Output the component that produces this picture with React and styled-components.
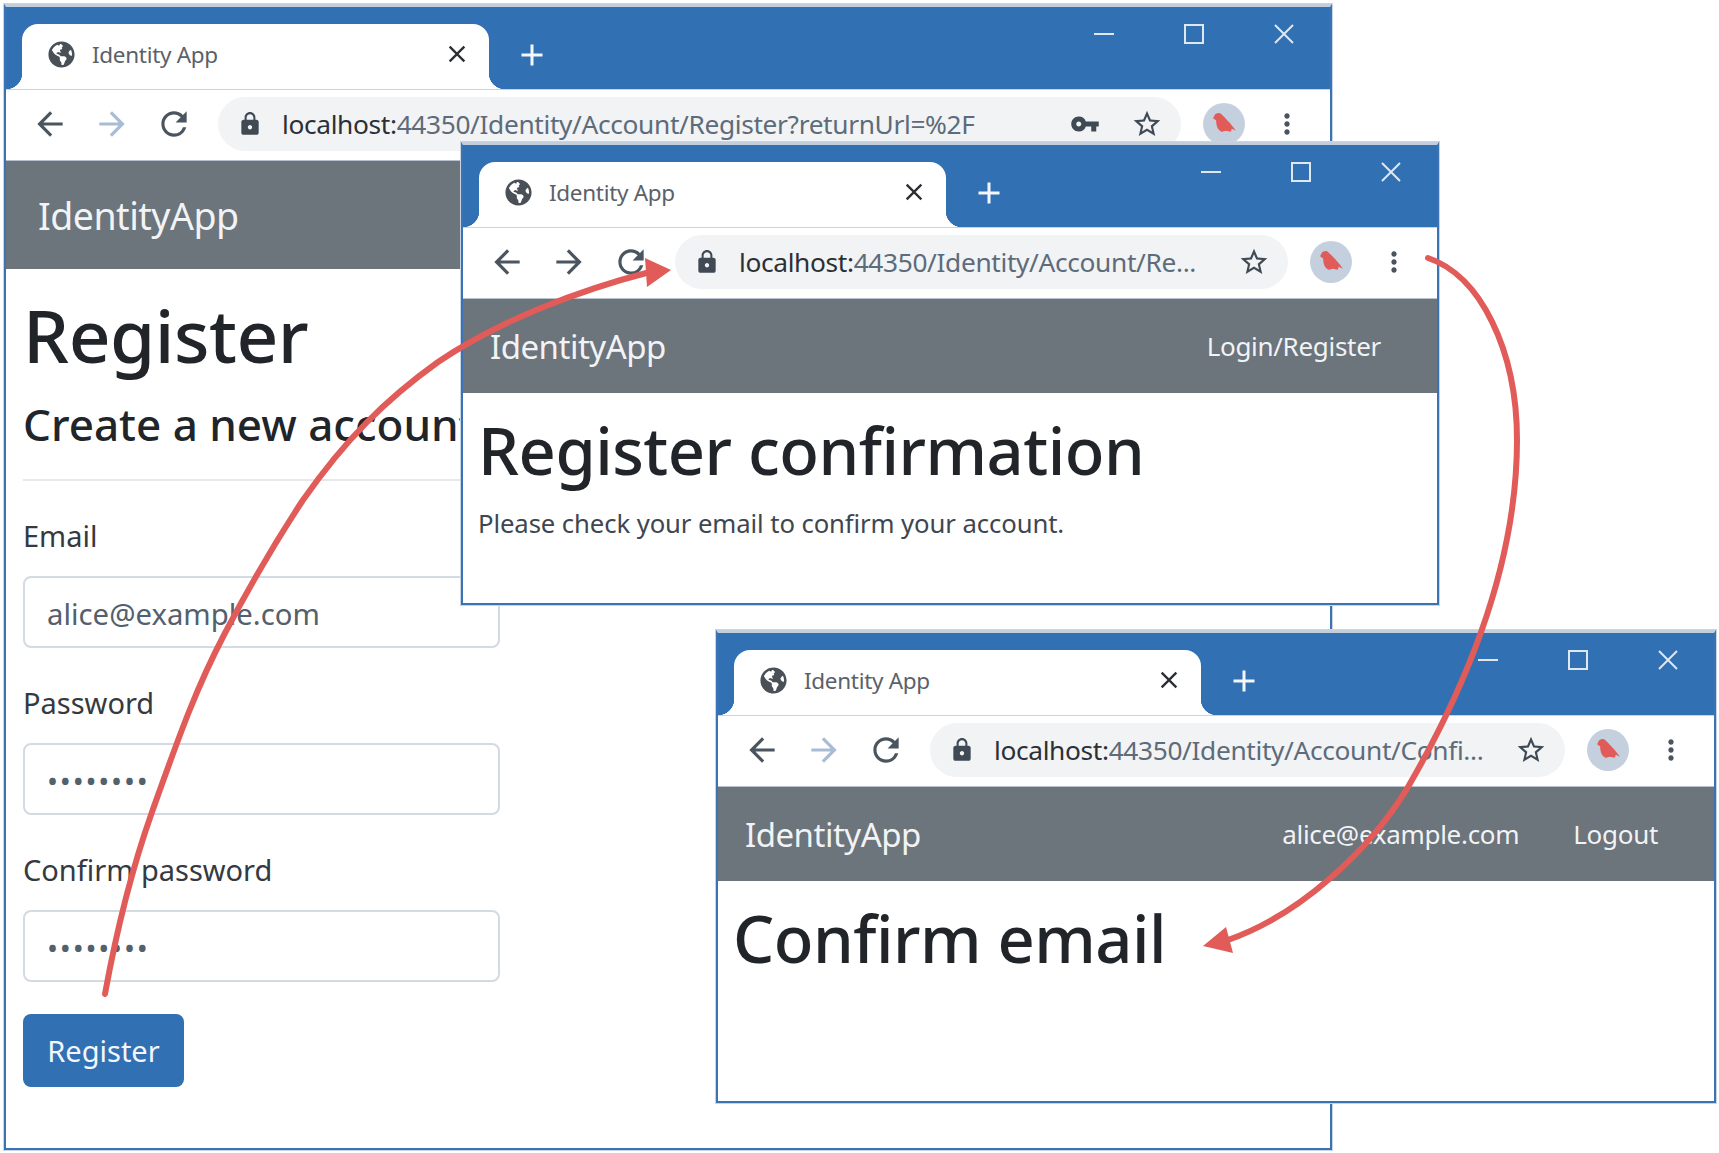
import React from "react";
import styled, { createGlobalStyle } from "styled-components";
import { FaGlobeAmericas } from "react-icons/fa";
import {
  MdAdd,
  MdArrowBack,
  MdArrowForward,
  MdClose,
  MdLock,
  MdMoreVert,
  MdRefresh,
  MdStarBorder,
  MdVpnKey,
} from "react-icons/md";

const GlobalStyle = createGlobalStyle`
  html, body {
    margin: 0;
    background: #fff;
    font-family: "Noto Sans", "Open Sans", sans-serif;
  }
`;

const Desktop = styled.div`
  position: relative;
  width: 1719px;
  height: 1153px;
  overflow: hidden;
  background: #fff;
`;

const Frame = styled.div`
  position: absolute;
  left: ${(p) => p.$left}px;
  top: ${(p) => p.$top}px;
  width: ${(p) => p.$width}px;
  height: ${(p) => p.$height}px;
  box-sizing: border-box;
  display: flex;
  flex-direction: column;
  background: #fff;
  border: 2px solid #3a72b4;
  border-top: 3px solid #c3cedd;
  outline: 1px solid #c9d4e2;
`;

const TabStrip = styled.div`
  height: 82px;
  flex: none;
  display: flex;
  align-items: flex-end;
  padding-left: 16px;
  background: #3270b4;
`;

const Tab = styled.div`
  position: relative;
  width: 467px;
  height: 65px;
  box-sizing: border-box;
  display: flex;
  align-items: center;
  padding: 0 18px 5px 26px;
  background: #fff;
  border-radius: 16px 16px 0 0;

  &::before,
  &::after {
    content: "";
    position: absolute;
    bottom: 0;
    width: 16px;
    height: 16px;
  }
  &::before {
    left: -16px;
    background: radial-gradient(circle at 0 0, #3270b4 16px, #fff 16.5px);
  }
  &::after {
    right: -16px;
    background: radial-gradient(circle at 100% 0, #3270b4 16px, #fff 16.5px);
  }
`;

const TabTitle = styled.span`
  flex: 1;
  margin-left: 17px;
  font-size: 22.5px;
  letter-spacing: -0.3px;
  color: #5a6169;
`;

const NewTab = styled.div`
  display: flex;
  margin: 0 0 16px 25px;
  color: #f3f6fa;
`;

const WindowControls = styled.div`
  margin-left: auto;
  align-self: flex-start;
  display: flex;
  gap: 70px;
  padding: 17px 36px 0 0;
`;

const ControlIcon = styled.svg`
  width: 20px;
  height: 20px;
  fill: none;
  stroke: #dfe7f1;
  stroke-width: 2;
`;

const Toolbar = styled.div`
  height: 71px;
  flex: none;
  box-sizing: border-box;
  display: flex;
  align-items: center;
  padding: 0 27px 3px 13px;
  background: #fff;
  border-top: 1px solid #c9d4e2;
`;

const NavButton = styled.div`
  width: 62px;
  display: flex;
  justify-content: center;
  color: ${(p) => (p.$disabled ? "#a9bcd6" : "#4a5560")};
`;

const Omnibox = styled.div`
  flex: 1;
  min-width: 0;
  height: 54px;
  display: flex;
  align-items: center;
  margin-left: 13px;
  padding: 0 18px 0 19px;
  border-radius: 27px;
  background: #f1f3f4;
  color: #3f4a55;
`;

const UrlText = styled.div`
  flex: 1;
  min-width: 0;
  margin-left: 19px;
  font-size: 26.3px;
  letter-spacing: -0.35px;
  white-space: nowrap;
  color: #5d6b7a;

  b {
    font-weight: 400;
    color: #2b3036;
  }
`;

const KeySlot = styled.div`
  display: flex;
  margin-right: 31px;
`;

const Avatar = styled.div`
  width: 42px;
  height: 42px;
  flex: none;
  display: flex;
  align-items: center;
  justify-content: center;
  margin-left: 22px;
  border-radius: 50%;
  background: #c5d0de;
`;

const Kebab = styled.div`
  display: flex;
  margin-left: 26px;
  color: #4a5560;
`;

const NavBar = styled.div`
  height: ${(p) => p.$height}px;
  flex: none;
  box-sizing: border-box;
  display: flex;
  align-items: center;
  justify-content: space-between;
  padding: 0 ${(p) => p.$padRight}px 0 ${(p) => p.$padLeft}px;
  background: #6c747c;
  border-top: 1px solid #b6c2d0;
  color: #f1f3f5;
`;

const Brand = styled.div`
  font-size: ${(p) => p.$size}px;
  letter-spacing: -0.5px;
`;

const NavLinks = styled.div`
  display: flex;
  gap: 54px;
  font-size: 26px;
  letter-spacing: -0.3px;
`;

const Body = styled.div`
  flex: 1;
  padding-left: ${(p) => p.$pad}px;
  color: #212529;
`;

const PageTitle = styled.h1`
  margin: ${(p) => p.$top}px 0 0;
  font-size: ${(p) => p.$size}px;
  line-height: ${(p) => p.$line}px;
  font-weight: 500;
  letter-spacing: -0.5px;
  white-space: nowrap;
`;

const SubTitle = styled.h4`
  margin: 17px 0 0;
  font-size: 44px;
  line-height: 50px;
  font-weight: 500;
  white-space: nowrap;
`;

const Rule = styled.hr`
  width: 477px;
  margin: 30px 0 0;
  border: 0;
  border-top: 2px solid #e6e8ea;
`;

const Field = styled.div`
  margin-top: ${(p) => p.$top}px;
`;

const Label = styled.div`
  font-size: 29px;
  line-height: 40px;
  color: #343a40;
`;

const TextInput = styled.input`
  display: block;
  width: 477px;
  height: 72px;
  box-sizing: border-box;
  margin-top: 20px;
  padding: 4px 22px 0;
  border: 2px solid #d2dae4;
  border-radius: 8px;
  outline: none;
  font-family: inherit;
  font-size: 29.3px;
  letter-spacing: ${(p) => (p.type === "password" ? "1.8px" : "0")};
  color: #53606d;
  background: #fff;
`;

const SubmitButton = styled.button`
  display: block;
  width: 161px;
  height: 73px;
  margin-top: 32px;
  border: 0;
  border-radius: 8px;
  background: #3270b4;
  color: #f3f6fa;
  font-family: inherit;
  font-size: 29px;
`;

const Message = styled.p`
  margin: 14px 0 0;
  font-size: 25.7px;
  line-height: 34px;
  letter-spacing: -0.1px;
  color: #3e4650;
`;

const ArrowLayer = styled.svg`
  position: absolute;
  left: 0;
  top: 0;
  width: 1719px;
  height: 1153px;
  pointer-events: none;
`;

const Bird = () => (
  <svg width="25" height="25" viewBox="0 0 24 24" fill="#e15b59">
    <path d="M2 5C3 2 7 1 9 3c4 4 8 8 11 12l3 4-4-2-1 3-5-1-3 1C6 19 4 15 4 9L1 7z" />
  </svg>
);

const BrowserWindow = ({ url, keyIcon, forwardDisabled, title, children, ...frame }) => (
  <Frame {...frame}>
    <TabStrip>
      <Tab>
        <FaGlobeAmericas size={27} color="#4a5057" />
        <TabTitle>{title}</TabTitle>
        <MdClose size={28} color="#2b2f33" />
      </Tab>
      <NewTab>
        <MdAdd size={36} />
      </NewTab>
      <WindowControls>
        <ControlIcon viewBox="0 0 20 20">
          <path d="M0 10h20" />
        </ControlIcon>
        <ControlIcon viewBox="0 0 20 20">
          <rect x="1" y="1" width="18" height="18" />
        </ControlIcon>
        <ControlIcon viewBox="0 0 20 20">
          <path d="M1 1l18 18M19 1L1 19" />
        </ControlIcon>
      </WindowControls>
    </TabStrip>
    <Toolbar>
      <NavButton>
        <MdArrowBack size={38} />
      </NavButton>
      <NavButton $disabled={forwardDisabled}>
        <MdArrowForward size={38} />
      </NavButton>
      <NavButton>
        <MdRefresh size={38} />
      </NavButton>
      <Omnibox>
        <MdLock size={26} />
        <UrlText>
          <b>localhost:</b>
          {url}
        </UrlText>
        {keyIcon && (
          <KeySlot>
            <MdVpnKey size={30} />
          </KeySlot>
        )}
        <MdStarBorder size={32} />
      </Omnibox>
      <Avatar>
        <Bird />
      </Avatar>
      <Kebab>
        <MdMoreVert size={32} />
      </Kebab>
    </Toolbar>
    {children}
  </Frame>
);

const App = () => (
  <Desktop>
    <GlobalStyle />
    <BrowserWindow
      $left={4}
      $top={4}
      $width={1328}
      $height={1146}
      title="Identity App"
      forwardDisabled
      keyIcon
      url="44350/Identity/Account/Register?returnUrl=%2F"
    >
      <NavBar $height={109} $padLeft={32} $padRight={40}>
        <Brand $size={37.5}>IdentityApp</Brand>
      </NavBar>
      <Body $pad={17}>
        <PageTitle $size={73} $line={95} $top={18}>
          Register
        </PageTitle>
        <SubTitle>Create a new account</SubTitle>
        <Rule />
        <Field $top={35}>
          <Label>Email</Label>
          <TextInput readOnly value="alice@example.com" />
        </Field>
        <Field $top={35}>
          <Label>Password</Label>
          <TextInput readOnly type="password" value="password" />
        </Field>
        <Field $top={35}>
          <Label>Confirm password</Label>
          <TextInput readOnly type="password" value="password" />
        </Field>
        <SubmitButton>Register</SubmitButton>
      </Body>
    </BrowserWindow>

    <BrowserWindow
      $left={461}
      $top={142}
      $width={978}
      $height={463}
      title="Identity App"
      url="44350/Identity/Account/Re..."
    >
      <NavBar $height={95} $padLeft={27} $padRight={56}>
        <Brand $size={33}>IdentityApp</Brand>
        <NavLinks>
          <span>Login/Register</span>
        </NavLinks>
      </NavBar>
      <Body $pad={15}>
        <PageTitle $size={65} $line={85} $top={15}>
          Register confirmation
        </PageTitle>
        <Message>Please check your email to confirm your account.</Message>
      </Body>
    </BrowserWindow>

    <BrowserWindow
      $left={716}
      $top={630}
      $width={1000}
      $height={473}
      title="Identity App"
      forwardDisabled
      url="44350/Identity/Account/Confi..."
    >
      <NavBar $height={95} $padLeft={27} $padRight={56}>
        <Brand $size={33}>IdentityApp</Brand>
        <NavLinks>
          <span>alice@example.com</span>
          <span>Logout</span>
        </NavLinks>
      </NavBar>
      <Body $pad={15}>
        <PageTitle $size={65} $line={85} $top={15}>
          Confirm email
        </PageTitle>
      </Body>
    </BrowserWindow>

    <ArrowLayer viewBox="0 0 1719 1153">
      <g fill="none" stroke="#e15b59" strokeWidth="6" strokeLinecap="round">
        <path d="M105 994C119 917 135 860 152 812C177 742 195 690 225 633C245 595 270 550 303 500C345 440 385 400 438 362C500 320 580 290 650 272" />
        <path d="M1428 258C1480 275 1517 350 1517 440C1517 560 1470 680 1408 787C1370 850 1300 915 1228 940" />
      </g>
      <path d="M671 270L645 258L647 287z" fill="#e15b59" />
      <path d="M1203 946L1226 927L1233 953z" fill="#e15b59" />
    </ArrowLayer>
  </Desktop>
);

export default App;
